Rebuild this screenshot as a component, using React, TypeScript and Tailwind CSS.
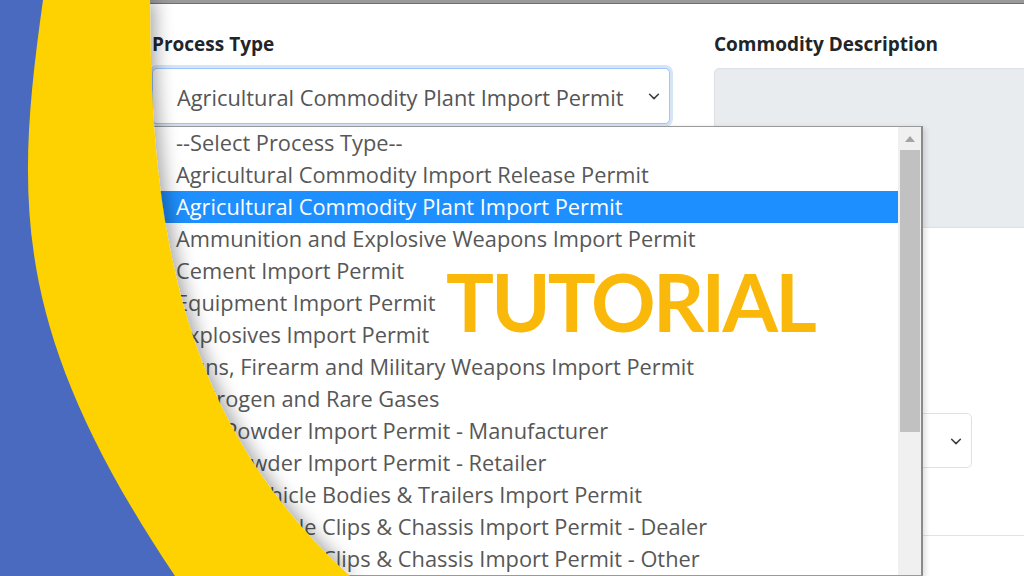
import React from 'react';

const options = [
  '--Select Process Type--',
  'Agricultural Commodity Import Release Permit',
  'Agricultural Commodity Plant Import Permit',
  'Ammunition and Explosive Weapons Import Permit',
  'Cement Import Permit',
  'Equipment Import Permit',
  'Explosives Import Permit',
  'Guns, Firearm and Military Weapons Import Permit',
  'Hydrogen and Rare Gases',
  'Gun Powder Import Permit - Manufacturer',
  'Gun Powder Import Permit - Retailer',
  'Motor Vehicle Bodies & Trailers Import Permit',
  'Motor Vehicle Clips & Chassis Import Permit - Dealer',
  'Motor Vehicle Clips & Chassis Import Permit - Other',
];

const Chevron = ({ className }: { className?: string }) => (
  <svg viewBox="0 0 16 16" className={className} fill="none">
    <path d="M3 6l5 5 5-5" stroke="#3a3f44" strokeWidth="1.8" strokeLinecap="round" strokeLinejoin="round" />
  </svg>
);

const DropdownList = () => (
  <div className="absolute left-0 top-[58px] flex w-[771px] border border-r-2 border-[#9a9a9a] border-r-[#8a8a8a] bg-white shadow-[2px_2px_6px_rgba(0,0,0,0.15)]">
    <ul className="flex-1">
      {options.map((opt, i) => (
        <li
          key={opt}
          className={
            i === 2
              ? 'h-[32px] bg-[#1e8fff] pl-[23px] text-[21.8px] leading-[32px] whitespace-nowrap text-white'
              : 'h-[32px] pl-[23px] text-[21.8px] leading-[32px] whitespace-nowrap text-[#575757]'
          }
        >
          {opt}
        </li>
      ))}
    </ul>
    <div className="flex w-[23px] flex-col bg-[#f0f0f0]">
      <div className="flex h-[23px] items-center justify-center">
        <svg viewBox="0 0 10 6" className="h-[6px] w-[10px]">
          <path d="M0 6L5 0L10 6Z" fill="#a3a3a3" />
        </svg>
      </div>
      <div className="ml-[2px] h-[282px] w-[20px] bg-[#c1c1c1]" />
    </div>
  </div>
);

export default function App() {
  return (
    <div className="relative h-[576px] w-[1024px] overflow-hidden bg-white font-['Open_Sans',sans-serif]">
      <div className="h-[4px] border-b border-[#6f6f6f] bg-[#9a9a9a]" />

      <div className="grid grid-cols-[518px_340px] gap-x-[44px] pl-[152px] pt-[26px]">
        {/* left column */}
        <div>
          <label className="mb-[10px] block text-[19px] font-bold leading-[28px] text-[#212529]">Process Type</label>
          <div className="relative">
            <div className="flex h-[56px] items-center justify-between rounded-[5px] border border-[#9ec5fe] bg-white pl-[24px] pr-[8px] shadow-[0_0_0_3px_rgba(180,205,240,0.55)]">
              <span className="pt-[5px] text-[21.8px] text-[#555]">Agricultural Commodity Plant Import Permit</span>
              <Chevron className="h-[14px] w-[14px]" />
            </div>
            <DropdownList />
          </div>
        </div>

        {/* right column */}
        <div>
          <label className="mb-[10px] block text-[19px] font-bold leading-[28px] text-[#212529]">Commodity Description</label>
          <div className="h-[160px] rounded-l-[5px] border border-[#dde1e5] bg-[#e9ecef]" />
          <div className="mt-[185px] flex h-[55px] w-[258px] items-center justify-end rounded-[5px] border border-[#dee2e6] pr-[8px]">
            <Chevron className="h-[14px] w-[14px]" />
          </div>
          <div className="mt-[67px] h-px bg-[#e3e3e3]" />
        </div>
      </div>

      {/* decorative blue / yellow arcs */}
      <svg className="absolute inset-0 h-[576px] w-[1024px]" viewBox="0 0 1024 576">
        <defs>
          <filter id="sh" x="-20%" y="-20%" width="140%" height="140%">
            <feDropShadow dx="5" dy="0" stdDeviation="9" floodColor="#000" floodOpacity="0.35" />
          </filter>
        </defs>
        <path d="M0 0H150C150 250 190 430 350 576H0Z" fill="#fdd200" filter="url(#sh)" />
        <path d="M0 0H43C15 200 10 330 175 576H0Z" fill="#4a6abf" />
      </svg>

      <div className="absolute left-[446px] top-[261px] font-['Lato',sans-serif] text-[80px] font-bold leading-[80px] tracking-[-2.8px] text-[#fab80a]">
        TUTORIAL
      </div>
    </div>
  );
}
